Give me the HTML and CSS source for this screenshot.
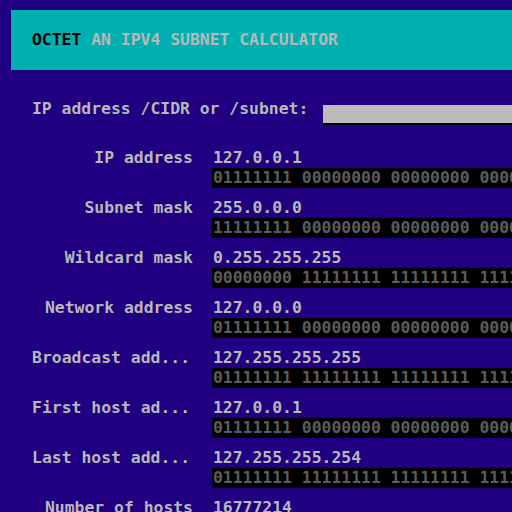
FILE: index.html
```html
<!DOCTYPE html>
<html>
<head>
<meta charset="utf-8">
<link rel="stylesheet" href="styles.css">
</head>
<body>
<header class="top">
  <h1 class="title"><span class="brand">OCTET</span> AN IPV4 SUBNET CALCULATOR</h1>
</header>
<main class="main">
  <div class="query">
    <label class="qlabel">IP address /CIDR or /subnet:</label>
    <div class="input"></div>
  </div>
  <div class="rows">
    <div class="label">IP address</div>
    <div class="val"><div class="dec">127.0.0.1</div><div class="bin">01111111 00000000 00000000 00000001</div></div>
    <div class="label">Subnet mask</div>
    <div class="val"><div class="dec">255.0.0.0</div><div class="bin">11111111 00000000 00000000 00000000</div></div>
    <div class="label">Wildcard mask</div>
    <div class="val"><div class="dec">0.255.255.255</div><div class="bin">00000000 11111111 11111111 11111111</div></div>
    <div class="label">Network address</div>
    <div class="val"><div class="dec">127.0.0.0</div><div class="bin">01111111 00000000 00000000 00000000</div></div>
    <div class="label cut">Broadcast add...</div>
    <div class="val"><div class="dec">127.255.255.255</div><div class="bin">01111111 11111111 11111111 11111111</div></div>
    <div class="label cut">First host ad...</div>
    <div class="val"><div class="dec">127.0.0.1</div><div class="bin">01111111 00000000 00000000 00000001</div></div>
    <div class="label cut">Last host add...</div>
    <div class="val"><div class="dec">127.255.255.254</div><div class="bin">01111111 11111111 11111111 11111110</div></div>
    <div class="label">Number of hosts</div>
    <div class="val"><div class="dec">16777214</div></div>
  </div>
</main>
</body>
</html>
```
FILE: styles.css
```css
html, body {
  margin: 0;
  padding: 0;
  background: #200080;
  overflow: hidden;
}
body {
  padding: 10px 0 0 11px;
  width: 512px;
  box-sizing: border-box;
  font-family: "DejaVu Sans Mono", "Liberation Mono", monospace;
  font-weight: bold;
  font-size: 16.4px;
  line-height: 20px;
  color: #b8b8b8;
}
.top {
  background: #00b0b0;
  height: 60px;
  padding: 20px 0 0 21px;
  box-sizing: border-box;
  width: 700px;
}
.title {
  margin: 0;
  font-size: 16.4px;
  font-weight: bold;
  line-height: 20px;
  color: #b8b8b8;
  white-space: nowrap;
}
.brand {
  color: #000;
}
.main {
  padding: 29px 0 0 21px;
}
.query {
  display: flex;
  align-items: flex-start;
  white-space: nowrap;
}
.qlabel {
  width: 291px;
  flex: none;
}
.input {
  margin-top: 6px;
  width: 300px;
  height: 18px;
  background: #bcbcbc;
  box-shadow: 0 2px 0 #000;
  flex: none;
}
.rows {
  margin-top: 25px;
  display: grid;
  grid-template-columns: 161px 400px;
  column-gap: 20px;
  row-gap: 10px;
  white-space: nowrap;
}
.label {
  text-align: right;
}
.label.cut {
  margin-right: 3px;
}
.bin {
  background: #000;
  color: #5c5c5c;
  margin-left: -1px;
  padding-left: 1px;
  height: 20px;
  overflow: hidden;
}
```
